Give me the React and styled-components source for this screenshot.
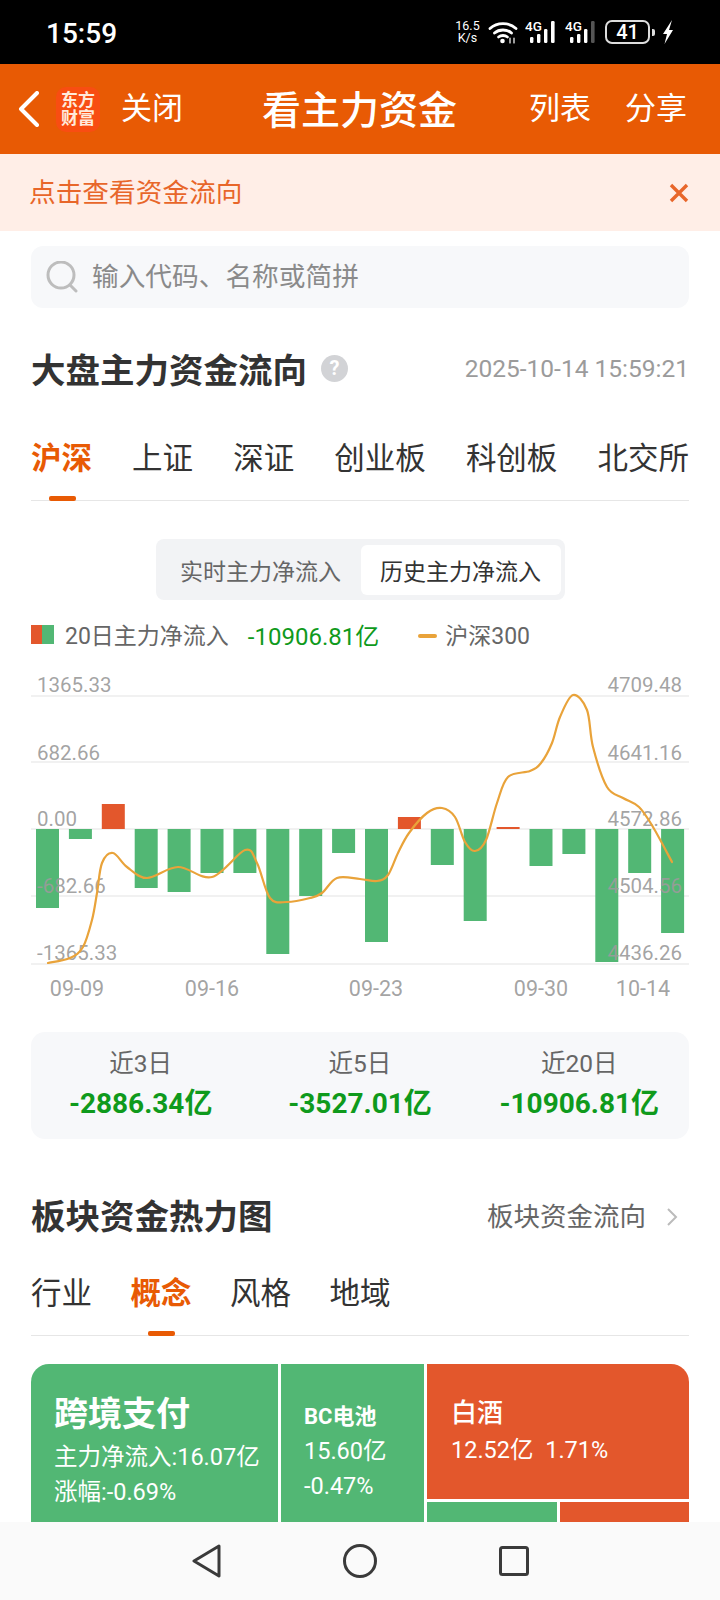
import React from 'react'
import styled, { createGlobalStyle } from 'styled-components'

const GlobalStyle = createGlobalStyle`
  html, body {
    margin: 0;
    padding: 0;
    background: #fff;
  }
  * { box-sizing: border-box; }
`;

const ORANGE = '#e85a04';
const RED = '#e3572c';
const GREEN = '#52b774';
const MONEY = '#0f9a1c';
const LINE = '#e9a33a';

// net inflow bars: bottom (or top) y of each bar, zero line is at 829
const BARS = [908, 839, 804, 888, 892, 873, 873, 954, 896, 853, 942, 817, 865, 921, 827, 866, 854, 962, 873, 933];
// index line, read off the chart in page pixels
const INDEX = [
  [48, 963], [70, 958], [83, 947], [92, 920], [97, 893], [102, 863], [113, 853],
  [127, 867], [147, 878], [178, 867], [212, 877], [245, 850], [257, 863], [270, 898],
  [287, 902], [310, 898], [322, 893], [337, 878], [360, 879], [377, 881], [388, 875],
  [398, 853], [409, 833], [427, 813], [442, 808], [455, 817], [465, 842], [475, 851],
  [486, 840], [497, 803], [508, 777], [530, 771], [541, 763], [552, 743], [560, 717],
  [573, 695], [587, 710], [593, 747], [607, 787], [623, 798], [639, 807], [653, 827], [672, 862],
];
const GRID = [696, 762, 829, 896, 964];
const LEFT_LABELS = [['1365.33', 692], ['682.66', 760], ['0.00', 826], ['-682.66', 893], ['-1365.33', 960]];
const RIGHT_LABELS = [['4709.48', 692], ['4641.16', 760], ['4572.86', 826], ['4504.56', 893], ['4436.26', 960]];
const DATES = [['09-09', 77], ['09-16', 212], ['09-23', 376], ['09-30', 541], ['10-14', 643]];

function smoothPath(points) {
  let d = `M${points[0][0]} ${points[0][1]}`;
  for (let i = 0; i < points.length - 1; i++) {
    const p0 = points[i - 1] || points[i];
    const p1 = points[i];
    const p2 = points[i + 1];
    const p3 = points[i + 2] || p2;
    const c1x = p1[0] + (p2[0] - p0[0]) / 6;
    const c1y = p1[1] + (p2[1] - p0[1]) / 6;
    const c2x = p2[0] - (p3[0] - p1[0]) / 6;
    const c2y = p2[1] - (p3[1] - p1[1]) / 6;
    d += `C${c1x} ${c1y} ${c2x} ${c2y} ${p2[0]} ${p2[1]}`;
  }
  return d;
}

function Wifi() {
  return (
    <svg width="30" height="24" viewBox="0 0 30 24" fill="none" stroke="#fff" strokeWidth="2.8" strokeLinecap="round">
      <path d="M2 8.5C9 2 21 2 28 8.5" />
      <path d="M6.5 13C11 9 19 9 23.5 13" />
      <path d="M10.5 17C13 15 17 15 19.5 17" />
      <circle cx="14.5" cy="21" r="2.3" fill="#fff" stroke="none" />
      <path d="M22 18v5M26 18v5" strokeWidth="1.2" />
    </svg>
  )
}

function Signal({ dim }) {
  return (
    <SignalIcon width="33" height="30" viewBox="0 -6 33 30">
      <text x="0" y="11" fontFamily="Roboto, sans-serif" fontSize="13.5" fontWeight="500" fill="#fff">4G</text>
      <rect x="5" y="17" width="3.4" height="6" rx="1.2" fill="#fff" />
      <rect x="12" y="14" width="3.4" height="9" rx="1.2" fill="#fff" />
      <rect x="19" y="9" width="3.4" height="14" rx="1.2" fill="#fff" />
      <rect x="26" y="1" width="3.6" height="22" rx="1.2" fill={dim ? '#555' : '#fff'} />
    </SignalIcon>
  )
}

export default function App() {
  return (
    <Page>
      <GlobalStyle />
      <StatusBar>
        <Clock>15:59</Clock>
        <StatusIcons>
          <NetSpeed>16.5<br />K/s</NetSpeed>
          <Wifi />
          <Signal />
          <Signal dim />
          <Battery>41</Battery>
          <BatteryNub />
          <svg width="12" height="24" viewBox="0 0 12 24">
            <path d="M10 0L1 14h4L2.5 24 11 10H7z" fill="#fff" />
          </svg>
        </StatusIcons>
      </StatusBar>

      <Header>
        <svg width="21" height="36" viewBox="0 0 21 36" fill="none">
          <path d="M19 2L3 18l16 16" stroke="#fff" strokeWidth="4" strokeLinecap="round" strokeLinejoin="round" />
        </svg>
        <Logo>东方<br />财富</Logo>
        <HeaderLink $left="21px">关闭</HeaderLink>
        <HeaderTitle>看主力资金</HeaderTitle>
        <HeaderActions>
          <HeaderLink>列表</HeaderLink>
          <HeaderLink>分享</HeaderLink>
        </HeaderActions>
      </Header>

      <Notice>
        <NoticeText>点击查看资金流向</NoticeText>
        <svg width="20" height="20" viewBox="0 0 20 20" fill="none">
          <path d="M2 2l16 16M18 2L2 18" stroke="#e8662a" strokeWidth="3.4" />
        </svg>
      </Notice>

      <Main>
        <SearchBox>
          <svg width="32" height="32" viewBox="0 0 32 32" fill="none" stroke="#bdbdbd">
            <circle cx="15" cy="14" r="13" strokeWidth="3" />
            <path d="M24 24l6 6" strokeWidth="3" strokeLinecap="round" />
          </svg>
          <SearchText>输入代码、名称或简拼</SearchText>
        </SearchBox>

        <TitleRow>
          <SectionTitle>大盘主力资金流向</SectionTitle>
          <Help>?</Help>
          <Timestamp>2025-10-14 15:59:21</Timestamp>
        </TitleRow>

        <TabBar $spread>
          <Tab $active>沪深</Tab>
          <Tab>上证</Tab>
          <Tab>深证</Tab>
          <Tab>创业板</Tab>
          <Tab>科创板</Tab>
          <Tab>北交所</Tab>
        </TabBar>

        <Toggle>
          <ToggleItem>实时主力净流入</ToggleItem>
          <ToggleItem $active>历史主力净流入</ToggleItem>
        </Toggle>

        <Legend>
          <LegendSwatch />
          <LegendText>20日主力净流入</LegendText>
          <LegendValue>-10906.81亿</LegendValue>
          <LegendLine />
          <LegendText>沪深300</LegendText>
        </Legend>

        <Chart viewBox="31 660 658 350" width="658" height="350">
          {GRID.map((y) => (
            <rect key={y} x="31" y={y - 1} width="658" height="2" fill="#f1f1f1" />
          ))}
          {BARS.map((y, i) => (
            <rect
              key={i}
              x={36 + i * 32.9}
              y={Math.min(y, 829)}
              width="23"
              height={Math.abs(y - 829)}
              fill={y < 829 ? RED : GREEN}
            />
          ))}
          <g fontFamily="Roboto, sans-serif" fontSize="20.5" fill="#9b9b9b" fillOpacity="0.92">
            {LEFT_LABELS.map(([t, y]) => (
              <text key={t} x="37" y={y}>{t}</text>
            ))}
            {RIGHT_LABELS.map(([t, y]) => (
              <text key={t} x="682" y={y} textAnchor="end">{t}</text>
            ))}
            {DATES.map(([t, x]) => (
              <text key={t} x={x} y="996" textAnchor="middle" fontSize="21.5">{t}</text>
            ))}
          </g>
          <path d={smoothPath(INDEX)} fill="none" stroke={LINE} strokeWidth="2.2" strokeLinecap="round" />
        </Chart>

        <Summary>
          <SummaryItem>
            <SummaryLabel>近3日</SummaryLabel>
            <SummaryValue>-2886.34亿</SummaryValue>
          </SummaryItem>
          <SummaryItem>
            <SummaryLabel>近5日</SummaryLabel>
            <SummaryValue>-3527.01亿</SummaryValue>
          </SummaryItem>
          <SummaryItem>
            <SummaryLabel>近20日</SummaryLabel>
            <SummaryValue>-10906.81亿</SummaryValue>
          </SummaryItem>
        </Summary>

        <SectionHead>
          <SectionTitle>板块资金热力图</SectionTitle>
          <MoreLink>
            板块资金流向
            <MoreArrow width="12" height="20" viewBox="0 0 12 20" fill="none">
              <path d="M2 2l8 8-8 8" stroke="#bbb" strokeWidth="2" />
            </MoreArrow>
          </MoreLink>
        </SectionHead>

        <TabBar>
          <Tab>行业</Tab>
          <Tab $active>概念</Tab>
          <Tab>风格</Tab>
          <Tab>地域</Tab>
        </TabBar>

        <HeatMap>
          <Cell $tone={GREEN} $top="28px" $left="23px">
            <CellTitle $size="34px" $height="44px" $gap="4px" $weight="700">跨境支付</CellTitle>
            <CellLine>主力净流入:16.07亿</CellLine>
            <CellLine>涨幅:-0.69%</CellLine>
          </Cell>
          <Cell $tone={GREEN} $top="35px" $left="23px">
            <CellTitle $size="22px" $height="35px" $weight="700">BC电池</CellTitle>
            <CellLine>15.60亿</CellLine>
            <CellLine>-0.47%</CellLine>
          </Cell>
          <HeatColumn>
            <Cell $tone={RED} $top="31px" $left="24px">
              <CellTitle $size="26px" $height="36px" $gap="2px" $weight="500">白酒</CellTitle>
              <CellLine>12.52亿&nbsp;&nbsp;1.71%</CellLine>
            </Cell>
            <HeatRow>
              <Cell $tone={GREEN} />
              <Cell $tone={RED} />
            </HeatRow>
          </HeatColumn>
        </HeatMap>
      </Main>

      <NavBar>
        <svg width="30" height="34" viewBox="0 0 30 34" fill="none" stroke="#3a3a3a" strokeWidth="3" strokeLinejoin="round">
          <path d="M27 2L2 17l25 15z" />
        </svg>
        <svg width="34" height="34" viewBox="0 0 34 34" fill="none" stroke="#3a3a3a" strokeWidth="3">
          <circle cx="17" cy="17" r="15.5" />
        </svg>
        <svg width="30" height="30" viewBox="0 0 30 30" fill="none" stroke="#3a3a3a" strokeWidth="3" strokeLinejoin="round">
          <rect x="1.5" y="1.5" width="27" height="27" rx="2" />
        </svg>
      </NavBar>
    </Page>
  )
}

const Page = styled.div`
  position: relative;
  width: 720px;
  height: 1600px;
  overflow: hidden;
  background: #fff;
  color: #333;
  font-family: Roboto, "Noto Sans CJK SC", sans-serif;
`;

const StatusBar = styled.div`
  display: flex;
  align-items: center;
  height: 64px;
  padding: 0 46px 0 46px;
  background: #000;
  color: #fff;
`;

const Clock = styled.div`
  padding-top: 2px;
  font-size: 28px;
  font-weight: 500;
`;

const StatusIcons = styled.div`
  display: flex;
  align-items: center;
  gap: 7px;
  margin-left: auto;
`;

const NetSpeed = styled.div`
  width: 27px;
  font-size: 12.5px;
  line-height: 12px;
  text-align: center;
`;

const SignalIcon = styled.svg`
  margin-top: -6px;
`;

const Battery = styled.div`
  display: flex;
  align-items: center;
  justify-content: center;
  width: 45px;
  height: 24px;
  border: 2px solid #ddd;
  border-radius: 7px;
  font-size: 20px;
  font-weight: 500;
`;

const BatteryNub = styled.div`
  width: 3px;
  height: 7px;
  margin-left: -5px;
  border-radius: 0 2px 2px 0;
  background: #ddd;
`;

const Header = styled.div`
  display: flex;
  align-items: center;
  height: 90px;
  padding: 0 33px 0 18px;
  background: ${ORANGE};
  color: #fff;
`;

const Logo = styled.div`
  width: 44px;
  height: 45px;
  margin-left: 17px;
  padding-top: 4px;
  border-radius: 10px;
  background: #f84d12;
  color: #ffeadb;
  font-size: 17px;
  font-weight: 700;
  line-height: 18px;
  text-align: center;
`;

const HeaderLink = styled.div`
  margin-left: ${(p) => p.$left || 0};
  font-size: 31px;
  line-height: 40px;
`;

const HeaderTitle = styled.div`
  margin: -4px 0 0 79px;
  font-size: 39px;
  font-weight: 500;
`;

const HeaderActions = styled.div`
  display: flex;
  gap: 34px;
  margin-left: auto;
`;

const Notice = styled.div`
  display: flex;
  align-items: center;
  justify-content: space-between;
  height: 77px;
  padding: 0 31px 0 29px;
  background: #ffeee7;
  color: #e8662a;
`;

const NoticeText = styled.span`
  margin-top: -5px;
  font-size: 26.7px;
`;

const Main = styled.div`
  padding: 15px 31px 0;
`;

const SearchBox = styled.div`
  display: flex;
  align-items: center;
  gap: 14px;
  height: 62px;
  padding-left: 15px;
  border-radius: 12px;
  background: #f7f8fa;
`;

const SearchText = styled.span`
  margin-top: -5px;
  color: #8a8a8a;
  font-size: 26.7px;
`;

const TitleRow = styled.div`
  display: flex;
  align-items: center;
  height: 60px;
  margin-top: 30px;
`;

const SectionTitle = styled.div`
  color: #333;
  font-size: 34.5px;
  font-weight: 700;
  white-space: nowrap;
`;

const Help = styled.div`
  width: 27px;
  height: 27px;
  margin-left: 14px;
  border-radius: 50%;
  background: #d2d3d6;
  color: #fff;
  font-size: 20px;
  font-weight: 700;
  line-height: 27px;
  text-align: center;
`;

const Timestamp = styled.div`
  margin-left: auto;
  color: #9b9b9b;
  font-size: 24.5px;
`;

const TabBar = styled.div`
  display: flex;
  justify-content: ${(p) => (p.$spread ? 'space-between' : 'flex-start')};
  gap: 38.5px;
  height: 81px;
  margin-top: ${(p) => (p.$spread ? '22px' : '13px')};
  border-bottom: 1px solid #e6e6e6;
`;

const Tab = styled.div`
  position: relative;
  color: ${(p) => (p.$active ? ORANGE : '#333')};
  font-size: 30.5px;
  font-weight: ${(p) => (p.$active ? 700 : 400)};
  line-height: 78px;

  &::after {
    content: '';
    display: ${(p) => (p.$active ? 'block' : 'none')};
    position: absolute;
    left: 50%;
    bottom: -1px;
    width: 27px;
    height: 5px;
    margin-left: -13px;
    border-radius: 2px;
    background: ${ORANGE};
  }
`;

const Toggle = styled.div`
  display: flex;
  width: 409px;
  height: 61px;
  margin: 38px auto 0;
  padding: 6px 4px 5px 5px;
  border-radius: 8px;
  background: #f2f3f5;
`;

const ToggleItem = styled.div`
  display: flex;
  align-items: center;
  justify-content: center;
  width: 200px;
  border-radius: 6px;
  background: ${(p) => (p.$active ? '#fff' : 'transparent')};
  color: ${(p) => (p.$active ? '#333' : '#666')};
  font-size: 23px;
`;

const Legend = styled.div`
  display: flex;
  align-items: center;
  height: 40px;
  margin-top: 14px;
`;

const LegendSwatch = styled.div`
  width: 23px;
  height: 19px;
  margin-right: 11px;
  background: linear-gradient(to right, ${RED} 50%, ${GREEN} 50%);
`;

const LegendText = styled.div`
  color: #666;
  font-size: 23px;
`;

const LegendValue = styled.div`
  margin-left: 19px;
  color: ${MONEY};
  font-size: 24px;
`;

const LegendLine = styled.div`
  width: 19px;
  height: 4px;
  margin: 4px 8px 0 39px;
  border-radius: 2px;
  background: ${LINE};
`;

const Chart = styled.svg`
  display: block;
  margin-top: 6px;
`;

const Summary = styled.div`
  display: grid;
  grid-template-columns: repeat(3, 1fr);
  height: 107px;
  margin-top: 22px;
  padding-top: 16px;
  border-radius: 14px;
  background: #f7f8fa;
`;

const SummaryItem = styled.div`
  text-align: center;
`;

const SummaryLabel = styled.div`
  color: #666;
  font-size: 24.5px;
  line-height: 32px;
`;

const SummaryValue = styled.div`
  margin-top: 5px;
  color: ${MONEY};
  font-size: 28px;
  font-weight: 700;
  line-height: 38px;
`;

const SectionHead = styled.div`
  display: flex;
  align-items: center;
  justify-content: space-between;
  height: 56px;
  margin-top: 47px;
`;

const MoreLink = styled.div`
  display: flex;
  align-items: center;
  gap: 20px;
  padding-right: 11px;
  color: #666;
  font-size: 26.5px;
`;

const MoreArrow = styled.svg`
  margin-top: 6px;
`;

const HeatMap = styled.div`
  display: grid;
  grid-template-columns: 247px 143px 1fr;
  gap: 3px;
  height: 240px;
  margin-top: 28px;
  border-radius: 18px;
  overflow: hidden;
`;

const HeatColumn = styled.div`
  display: grid;
  grid-template-rows: 135px 1fr;
  gap: 3px;
`;

const HeatRow = styled.div`
  display: grid;
  grid-template-columns: 130px 1fr;
  gap: 3px;
`;

const Cell = styled.div`
  padding: ${(p) => p.$top || 0} 0 0 ${(p) => p.$left || 0};
  background: ${(p) => p.$tone};
  color: #fff;
`;

const CellTitle = styled.div`
  margin-bottom: ${(p) => p.$gap || 0};
  font-size: ${(p) => p.$size};
  font-weight: ${(p) => p.$weight};
  line-height: ${(p) => p.$height};
`;

const CellLine = styled.div`
  font-size: 23.5px;
  line-height: 35px;
  white-space: nowrap;
`;

const NavBar = styled.div`
  position: absolute;
  left: 0;
  right: 0;
  bottom: 0;
  display: grid;
  grid-template-columns: repeat(3, 153.5px);
  justify-content: center;
  justify-items: center;
  align-items: center;
  height: 78px;
  background: #fafafa;
`;
